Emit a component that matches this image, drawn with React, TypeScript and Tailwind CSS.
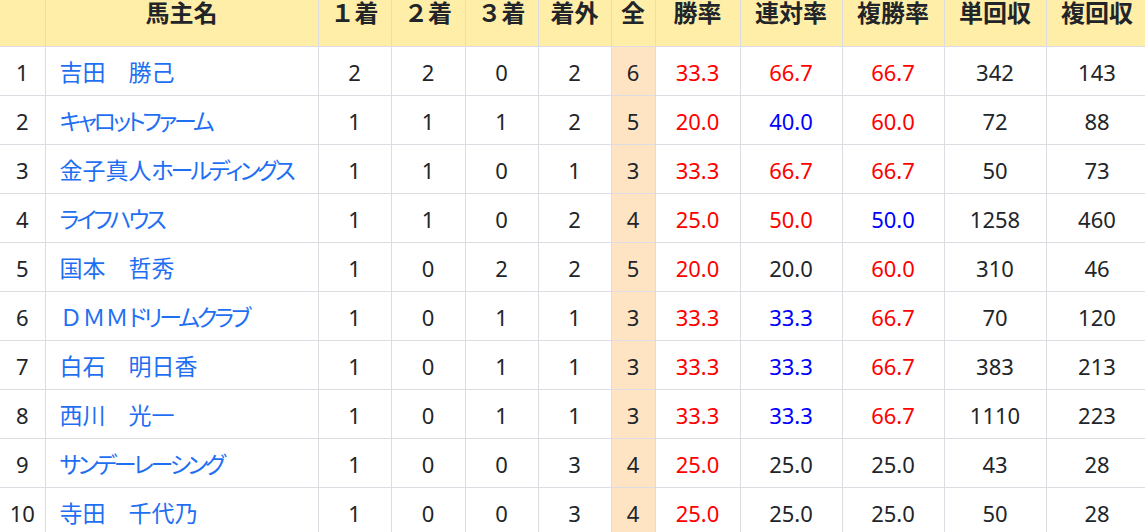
type Rate = { v: string; c: 'r' | 'b' | 'k' };

interface Row {
  name: string;
  p1: number;
  p2: number;
  p3: number;
  out: number;
  total: number;
  win: Rate;
  ren: Rate;
  fuku: Rate;
  tan: number;
  fk: number;
}

const r = (v: string): Rate => ({ v, c: 'r' });
const b = (v: string): Rate => ({ v, c: 'b' });
const k = (v: string): Rate => ({ v, c: 'k' });

const rows: Row[] = [
  { name: '吉田　勝己', p1: 2, p2: 2, p3: 0, out: 2, total: 6, win: r('33.3'), ren: r('66.7'), fuku: r('66.7'), tan: 342, fk: 143 },
  { name: 'キャロットファーム', p1: 1, p2: 1, p3: 1, out: 2, total: 5, win: r('20.0'), ren: b('40.0'), fuku: r('60.0'), tan: 72, fk: 88 },
  { name: '金子真人ホールディングス', p1: 1, p2: 1, p3: 0, out: 1, total: 3, win: r('33.3'), ren: r('66.7'), fuku: r('66.7'), tan: 50, fk: 73 },
  { name: 'ライフハウス', p1: 1, p2: 1, p3: 0, out: 2, total: 4, win: r('25.0'), ren: r('50.0'), fuku: b('50.0'), tan: 1258, fk: 460 },
  { name: '国本　哲秀', p1: 1, p2: 0, p3: 2, out: 2, total: 5, win: r('20.0'), ren: k('20.0'), fuku: r('60.0'), tan: 310, fk: 46 },
  { name: 'ＤＭＭドリームクラブ', p1: 1, p2: 0, p3: 1, out: 1, total: 3, win: r('33.3'), ren: b('33.3'), fuku: r('66.7'), tan: 70, fk: 120 },
  { name: '白石　明日香', p1: 1, p2: 0, p3: 1, out: 1, total: 3, win: r('33.3'), ren: b('33.3'), fuku: r('66.7'), tan: 383, fk: 213 },
  { name: '西川　光一', p1: 1, p2: 0, p3: 1, out: 1, total: 3, win: r('33.3'), ren: b('33.3'), fuku: r('66.7'), tan: 1110, fk: 223 },
  { name: 'サンデーレーシング', p1: 1, p2: 0, p3: 0, out: 3, total: 4, win: r('25.0'), ren: k('25.0'), fuku: k('25.0'), tan: 43, fk: 28 },
  { name: '寺田　千代乃', p1: 1, p2: 0, p3: 0, out: 3, total: 4, win: r('25.0'), ren: k('25.0'), fuku: k('25.0'), tan: 50, fk: 28 },
];

const colorOf = (c: Rate['c']) =>
  c === 'r' ? 'text-[#ff0000]' : c === 'b' ? 'text-[#0000ff]' : 'text-[#212529]';

const headers = ['', '馬主名', '１着', '２着', '３着', '着外', '全', '勝率', '連対率', '複勝率', '単回収', '複回収'];
const widths = ['w-[45px]', 'w-[273px]', 'w-[73px]', 'w-[74px]', 'w-[73px]', 'w-[73px]', 'w-[44px]', 'w-[85px]', 'w-[102px]', 'w-[102px]', 'w-[102px]', 'w-[102px]'];

const cell = 'border-r border-b border-[#dcdce2] text-center pt-[3px]';

// kana sit narrower than kanji in the original font
const KANA = /([\u3041-\u30ff]+)/;

function OwnerName({ name }: { name: string }) {
  const parts = name.split(KANA).filter(Boolean);
  return (
    <>
      {parts.map((p, i) =>
        KANA.test(p) ? (
          <span key={i} className="[font-feature-settings:'palt'] tracking-[-3.1px]">
            {p}
          </span>
        ) : (
          <span key={i}>{p}</span>
        ),
      )}
    </>
  );
}

export default function App() {
  return (
    <div
      className="w-[1145px] h-[532px] overflow-hidden bg-white text-[#212529]"
      style={{ fontFamily: '"Noto Sans", "Noto Sans CJK JP", sans-serif' }}
    >
      <table className="table-fixed border-collapse w-[1148px] text-[22px]">
        <colgroup>
          {widths.map((w, i) => (
            <col key={i} className={w} />
          ))}
        </colgroup>
        <thead>
          <tr className="h-[46px] bg-[#ffeea8]">
            {headers.map((h, i) => (
              <th
                key={i}
                className="border-r border-b border-[#dcdce2] font-bold text-[24px] text-center align-top pt-[1px] leading-[24px]"
              >
                {h}
              </th>
            ))}
          </tr>
        </thead>
        <tbody>
          {rows.map((row, i) => (
            <tr key={i} className="h-[49px]">
              <td className={cell}>{i + 1}</td>
              <td className="border-r border-b border-[#dcdce2] pl-[14px] pt-[3px] text-left text-[23px] text-[#1f6ff2] whitespace-nowrap">
                <OwnerName name={row.name} />
              </td>
              <td className={cell}>{row.p1}</td>
              <td className={cell}>{row.p2}</td>
              <td className={cell}>{row.p3}</td>
              <td className={cell}>{row.out}</td>
              <td className={`${cell} bg-[#ffe4c4]`}>{row.total}</td>
              <td className={`${cell} ${colorOf(row.win.c)}`}>{row.win.v}</td>
              <td className={`${cell} ${colorOf(row.ren.c)}`}>{row.ren.v}</td>
              <td className={`${cell} ${colorOf(row.fuku.c)}`}>{row.fuku.v}</td>
              <td className={cell}>{row.tan}</td>
              <td className={cell}>{row.fk}</td>
            </tr>
          ))}
        </tbody>
      </table>
    </div>
  );
}
